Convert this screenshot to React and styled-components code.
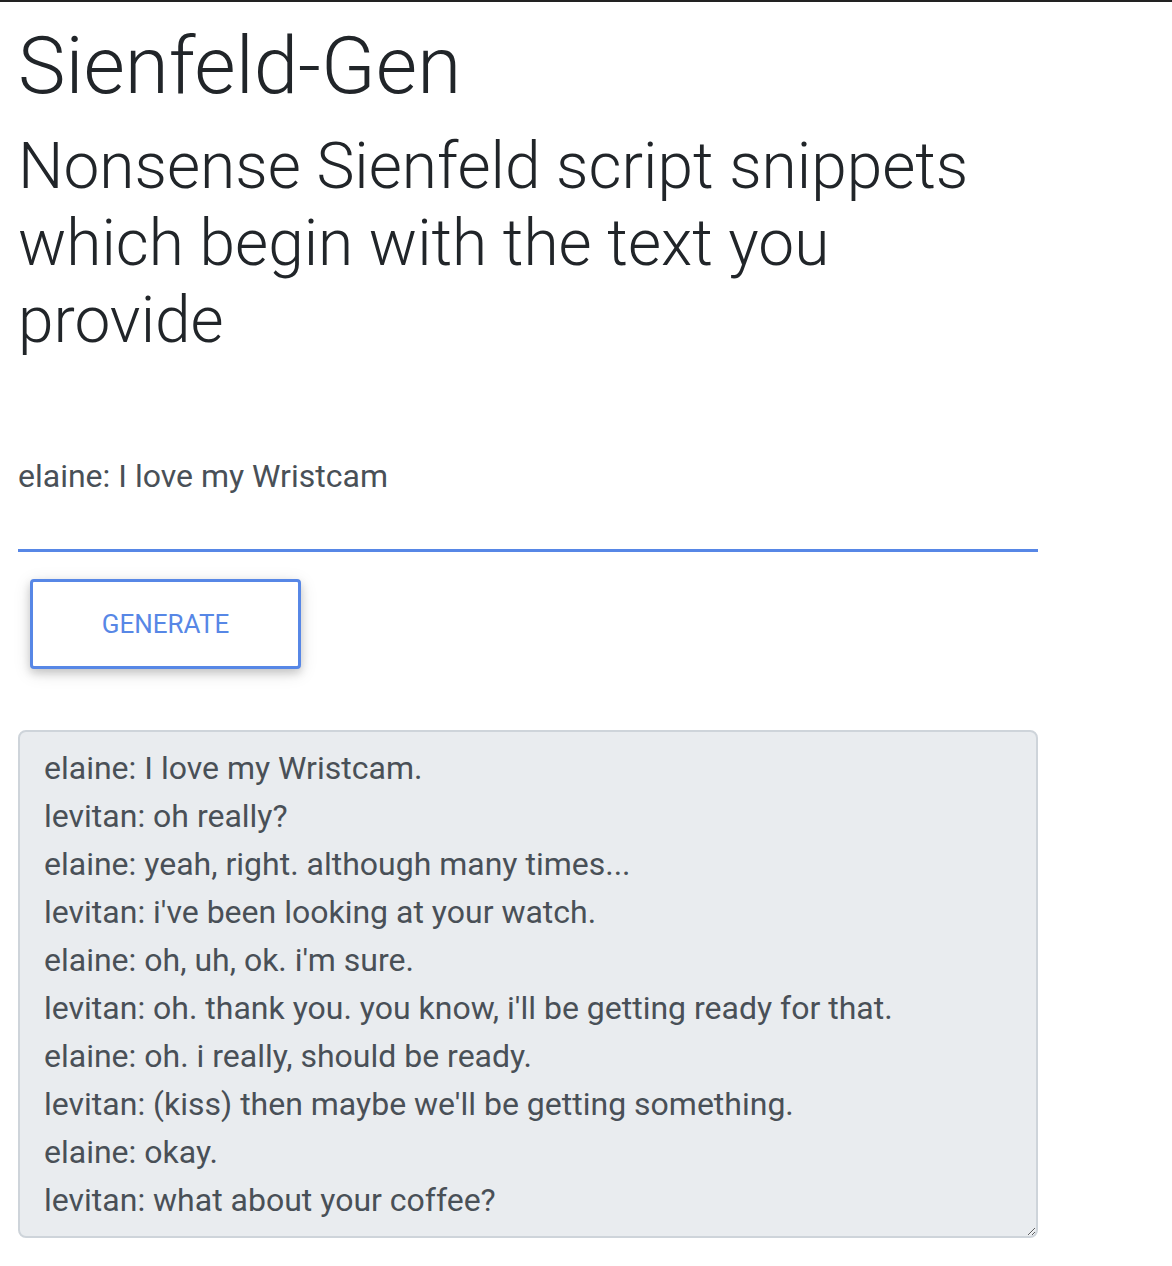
import React, { useState } from 'react';
import styled, { createGlobalStyle } from 'styled-components';

const GlobalStyle = createGlobalStyle`
  html, body {
    margin: 0;
    padding: 0;
    background: #fff;
  }
  body {
    border-top: 2px solid #222;
    font-family: Roboto, 'Liberation Sans', sans-serif;
  }
`;

const script = [
  'elaine: I love my Wristcam.',
  'levitan: oh really?',
  'elaine: yeah, right. although many times...',
  "levitan: i've been looking at your watch.",
  "elaine: oh, uh, ok. i'm sure.",
  "levitan: oh. thank you. you know, i'll be getting ready for that.",
  'elaine: oh. i really, should be ready.',
  "levitan: (kiss) then maybe we'll be getting something.",
  'elaine: okay.',
  'levitan: what about your coffee?',
].join('\n');

const App = () => {
  const [prompt, setPrompt] = useState('elaine: I love my Wristcam');

  return (
    <Page>
      <GlobalStyle />
      <Title>Sienfeld-Gen</Title>
      <Subtitle>Nonsense Sienfeld script snippets which begin with the text you provide</Subtitle>
      <PromptInput value={prompt} onChange={(e) => setPrompt(e.target.value)} />
      <GenerateButton type='button'>Generate</GenerateButton>
      <Output readOnly value={script} />
    </Page>
  );
};

const Page = styled.main`
  display: flex;
  flex-direction: column;
  align-items: flex-start;
  width: 1020px;
  padding: 0 18px 28px;
`;

const Title = styled.h1`
  margin: 17px 0 0;
  font-size: 80px;
  font-weight: 300;
  line-height: 94px;
  color: #212529;
`;

const Subtitle = styled.h2`
  margin: 15px 0 0;
  font-size: 64px;
  font-weight: 300;
  line-height: 77px;
  color: #212529;
`;

const PromptInput = styled.input`
  box-sizing: content-box;
  width: 100%;
  height: 38px;
  margin-top: 98px;
  padding: 0 0 54px;
  border: none;
  border-bottom: 3px solid #5787e6;
  outline: none;
  background: transparent;
  font-family: Roboto, 'Liberation Sans', sans-serif;
  font-size: 32px;
  color: #495057;
`;

const GenerateButton = styled.button`
  width: 271px;
  height: 90px;
  margin: 27px 0 0 12px;
  border: 3px solid #5787e6;
  border-radius: 4px;
  background: #fff;
  box-shadow: 0 4px 9px rgba(0, 0, 0, 0.16), 0 4px 18px rgba(0, 0, 0, 0.12);
  font-family: Roboto, 'Liberation Sans', sans-serif;
  font-size: 26px;
  text-transform: uppercase;
  color: #5787e6;
  cursor: pointer;
`;

const Output = styled.textarea`
  box-sizing: border-box;
  width: 100%;
  height: 508px;
  margin-top: 61px;
  padding: 12px 24px;
  border: 2px solid #ced4da;
  border-radius: 8px;
  background: #e9ecef;
  font-family: Roboto, 'Liberation Sans', sans-serif;
  font-size: 32px;
  line-height: 48px;
  color: #495057;
  outline: none;
`;

export default App;
